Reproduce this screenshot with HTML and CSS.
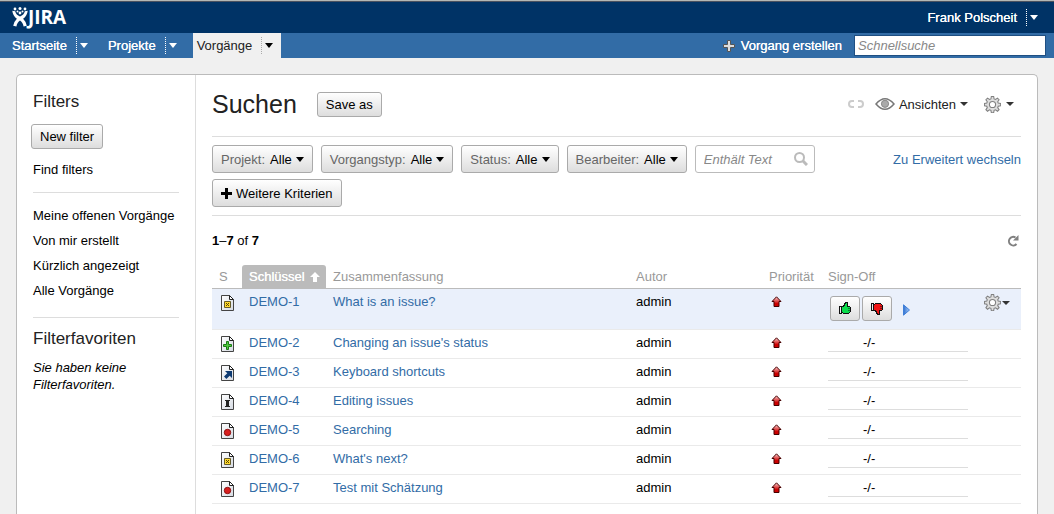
FILE: index.html
```html
<!DOCTYPE html>
<html lang="de">
<head>
    <meta charset="UTF-8">
    <meta name="viewport" content="width=device-width, initial-scale=1.0">
    <title>Suchen - JIRA</title>
    <link rel="stylesheet" href="styles.css">
</head>
<body>
    <!-- icon sprite -->
    <svg class="sprite" width="0" height="0" aria-hidden="true">
        <defs>
            <linearGradient id="page-fill" x1="0" y1="0" x2="1" y2="1">
                <stop offset="0" stop-color="#fff"/>
                <stop offset="1" stop-color="#d5dae2"/>
            </linearGradient>
            <linearGradient id="red-fill" x1="0" y1="0" x2="0" y2="1">
                <stop offset="0.1" stop-color="#f7b5b5"/>
                <stop offset="0.7" stop-color="#c00"/>
            </linearGradient>
            <linearGradient id="play-fill" x1="0" y1="0" x2="1" y2="0">
                <stop offset="0" stop-color="#2f6fd0"/>
                <stop offset="1" stop-color="#a9cdf6"/>
            </linearGradient>
        </defs>
        <symbol id="page" viewBox="0 0 13 16">
            <path d="M.5.5h8l4 4v11H.5z" fill="url(#page-fill)" stroke="#444"/>
            <path d="M8.5.5v4h4z" fill="#fff" stroke="#222"/>
        </symbol>
        <symbol id="gear" viewBox="0 0 16 16">
            <path d="M6.900.5h2.200l.4 2.300 1.300.5 1.900-1.300 1.500 1.500-1.300 1.900.5 1.300 2.300.4v2.100l-2.300.4-.5 1.300 1.300 1.900-1.500 1.500-1.900-1.300-1.300.5-.4 2.200H6.900l-.4-2.200-1.300-.5-1.900 1.300-1.500-1.500 1.300-1.900-.5-1.300L.4 9.200V7.100l2.200-.4.5-1.300-1.300-1.900L3.300 2l1.900 1.300 1.300-.5z" fill="#ddd" stroke="#808080"/>
            <circle cx="8" cy="8" r="2.900" fill="#fff" stroke="#808080"/>
        </symbol>
        <symbol id="thumb" viewBox="0 0 12 13">
            <path d="M6 0h3v4h2v1h1v5h-1v1h-1v1H4v-1H3v1H0V4h4V3h1V1h1z" fill="#111"/>
            <path d="M6 2h1V1h1v4h3v5h-1v1H4v-1H3V5h2V4h1z" fill="currentColor"/>
            <path d="M1 5h1v6H1z" fill="#eee"/>
            <path d="M2 5h1v6H2zM9 6h2v1H9zM9 8h2v1H9z" fill="#111" fill-opacity=".5"/>
        </symbol>
        <symbol id="prio" viewBox="0 0 11 11">
            <path d="M5.500.8 10 5.500H8v5H3v-5H1z" fill="url(#red-fill)" stroke="#400"/>
        </symbol>
        <symbol id="status-closed" viewBox="0 0 13 16">
            <use href="#page"/>
            <path d="M3.500 6.500h6v6h-6z" fill="#ffd92e" stroke="#665c2a"/>
            <path d="M5 8h1v1H5zM7 8h1v1H7zM6 9h1v1H6zM5 10h1v1H5zM7 10h1v1H7z" fill="#5a4600"/>
        </symbol>
        <symbol id="status-new" viewBox="0 0 13 16">
            <use href="#page"/>
            <path d="M5.500 5.500h2v3h3v2h-3v3h-2v-3h-3v-2h3z" fill="#4fc93c" stroke="#1a7a14"/>
        </symbol>
        <symbol id="status-assigned" viewBox="0 0 13 16">
            <use href="#page"/>
            <path d="M4 6h7v7L8.700 10.700 5.400 14 3 11.600l3.300-3.300z" fill="#0d3a72"/>
        </symbol>
        <symbol id="status-info" viewBox="0 0 13 16">
            <use href="#page"/>
            <path d="M4 6h5v1H8v5h1v1H4v-1h1V7H4z" fill="#222"/>
        </symbol>
        <symbol id="status-open" viewBox="0 0 13 16">
            <use href="#page"/>
            <circle cx="6.500" cy="9.500" r="3.200" fill="#d81e1e" stroke="#8c1010"/>
        </symbol>
    </svg>

    <header class="header">
        <a class="logo" href="#">
            <svg width="16" height="20" viewBox="0 0 16 20" fill="#fff" aria-hidden="true">
                <circle cx="3" cy="2" r="1.400"/><circle cx="8" cy="1.500" r="1.500"/><circle cx="13" cy="2" r="1.400"/>
                <circle cx="5.500" cy="4.500" r="1"/><circle cx="10.500" cy="4.500" r="1"/><circle cx="8" cy="6" r="1.400"/>
                <path d="M.3 3.800 3.200 4.300Q4 8 8 9.400 12 8 12.800 4.300l2.900-.5q-.5 5-4.600 8 2.800 2.700 3.700 6.900l-3.200.8Q10.600 15 8 13.600 5.400 15 4.400 19.500l-3.200-.8q.9-4.200 3.700-6.900-4.100-3-4.600-8z"/>
            </svg>
            <span>JIRA</span>
        </a>
        <div class="menu-item">
            <a href="#">Frank Polscheit</a>
            <button class="menu-arrow" aria-label="Benutzermenü"><i class="caret"></i></button>
        </div>
    </header>

    <nav class="nav">
        <div class="menu-item">
            <a href="#">Startseite</a>
            <button class="menu-arrow" aria-label="Startseite Menü"><i class="caret"></i></button>
        </div>
        <div class="menu-item">
            <a href="#">Projekte</a>
            <button class="menu-arrow" aria-label="Projekte Menü"><i class="caret"></i></button>
        </div>
        <div class="menu-item active">
            <a href="#">Vorgänge</a>
            <button class="menu-arrow" aria-label="Vorgänge Menü"><i class="caret"></i></button>
        </div>
        <a class="create" href="#">
            <svg width="12" height="12" viewBox="0 0 12 12" aria-hidden="true"><path d="M4.500.5h3v4h4v3h-4v4h-3v-4h-4v-3h4z" fill="#ddd" stroke="#555"/></svg>
            Vorgang erstellen
        </a>
        <input class="quick-search" type="text" placeholder="Schnellsuche" aria-label="Schnellsuche">
    </nav>

    <div class="panel">
        <aside class="sidebar">
            <h2>Filters</h2>
            <button class="btn new-filter">New filter</button>
            <a class="find" href="#">Find filters</a>
            <ul class="filter-list">
                <li><a href="#">Meine offenen Vorgänge</a></li>
                <li><a href="#">Von mir erstellt</a></li>
                <li><a href="#">Kürzlich angezeigt</a></li>
                <li><a href="#">Alle Vorgänge</a></li>
            </ul>
            <h2>Filterfavoriten</h2>
            <p class="empty">Sie haben keine Filterfavoriten.</p>
        </aside>

        <main class="content">
            <div class="title-bar">
                <h1>Suchen</h1>
                <button class="btn">Save as</button>
                <div class="tools">
                    <button class="tool" aria-label="Link">
                        <svg width="16" height="8" viewBox="0 0 16 8" fill="none" stroke="#ccc" stroke-width="2" aria-hidden="true"><path d="M6 1H4a3 3 0 0 0 0 6h2M10 1h2a3 3 0 0 1 0 6h-2"/></svg>
                    </button>
                    <button class="tool views">
                        <svg width="20" height="12" viewBox="0 0 20 12" aria-hidden="true"><path d="M1 6q9-10.500 18 0-9 10.500-18 0z" fill="#fff" stroke="#777" stroke-width="1.500"/><circle cx="10" cy="5.800" r="3.600" fill="#aaa" stroke="#888"/></svg>
                        Ansichten
                        <i class="caret small"></i>
                    </button>
                    <button class="tool options" aria-label="Optionen">
                        <svg width="17" height="17"><use href="#gear"/></svg>
                        <i class="caret small"></i>
                    </button>
                </div>
            </div>

            <div class="search-bar">
                <div class="criteria">
                    <button class="btn criterion"><span>Projekt:</span> Alle <i class="caret"></i></button>
                    <button class="btn criterion"><span>Vorgangstyp:</span> Alle <i class="caret"></i></button>
                    <button class="btn criterion"><span>Status:</span> Alle <i class="caret"></i></button>
                    <button class="btn criterion"><span>Bearbeiter:</span> Alle <i class="caret"></i></button>
                    <label class="text-search">
                        <input type="text" placeholder="Enthält Text" aria-label="Enthält Text">
                        <svg width="14" height="14" viewBox="0 0 14 14" fill="none" stroke="#bbb" aria-hidden="true"><circle cx="5.500" cy="5.500" r="4.500" stroke-width="2"/><path d="m9 9 4 4" stroke-width="3"/></svg>
                    </label>
                    <button class="btn criterion">
                        <svg width="11" height="11" viewBox="0 0 11 11" aria-hidden="true"><path d="M4 0h3v4h4v3H7v4H4V7H0V4h4z"/></svg>
                        Weitere Kriterien
                    </button>
                </div>
                <a class="switch" href="#">Zu Erweitert wechseln</a>
            </div>

            <div class="result-bar">
                <div><b>1</b>–<b>7</b> of <b>7</b></div>
                <button class="tool" aria-label="Aktualisieren">
                    <svg width="12" height="12" viewBox="0 0 12 12" aria-hidden="true"><path d="M9.500 9A4.300 4.300 0 1 1 8.500 2.500" fill="none" stroke="#808080" stroke-width="2"/><path d="M6 5.500h5.500V0z" fill="#808080"/></svg>
                </button>
            </div>

            <table class="issues">
                <thead>
                    <tr>
                        <th class="col-status">S</th>
                        <th class="col-key"><div>Schlüssel <svg width="10" height="10" viewBox="0 0 10 10" fill="#fff" aria-hidden="true"><path d="m5 0 5 5H7v5H3V5H0z"/></svg></div></th>
                        <th>Zusammenfassung</th>
                        <th class="col-author">Autor</th>
                        <th class="col-prio">Priorität</th>
                        <th class="col-sign">Sign-Off</th>
                        <th class="col-actions"></th>
                    </tr>
                </thead>
                <tbody>
                    <tr class="selected">
                        <td class="status"><svg width="13" height="16"><use href="#status-closed"/></svg></td>
                        <td><a href="#">DEMO-1</a></td>
                        <td><a href="#">What is an issue?</a></td>
                        <td>admin</td>
                        <td class="prio"><svg width="11" height="11"><use href="#prio"/></svg></td>
                        <td>
                            <div class="votes">
                                <button class="btn vote up" aria-label="Zustimmen"><svg width="12" height="13" shape-rendering="crispEdges"><use href="#thumb"/></svg></button>
                                <button class="btn vote down" aria-label="Ablehnen"><svg width="12" height="13" shape-rendering="crispEdges"><use href="#thumb"/></svg></button>
                                <button class="tool play" aria-label="Weiter"><svg width="7" height="12" viewBox="0 0 7 12"><path d="M.5.8v10.400L6.500 6z" fill="url(#play-fill)" stroke="#3f7fd8"/></svg></button>
                            </div>
                        </td>
                        <td class="actions"><button class="tool" aria-label="Aktionen"><svg width="17" height="17"><use href="#gear"/></svg><i class="caret small"></i></button></td>
                    </tr>
                    <tr>
                        <td class="status"><svg width="13" height="16"><use href="#status-new"/></svg></td>
                        <td><a href="#">DEMO-2</a></td>
                        <td><a href="#">Changing an issue's status</a></td>
                        <td>admin</td>
                        <td class="prio"><svg width="11" height="11"><use href="#prio"/></svg></td>
                        <td><div class="sign">-/-</div></td>
                        <td></td>
                    </tr>
                    <tr>
                        <td class="status"><svg width="13" height="16"><use href="#status-assigned"/></svg></td>
                        <td><a href="#">DEMO-3</a></td>
                        <td><a href="#">Keyboard shortcuts</a></td>
                        <td>admin</td>
                        <td class="prio"><svg width="11" height="11"><use href="#prio"/></svg></td>
                        <td><div class="sign">-/-</div></td>
                        <td></td>
                    </tr>
                    <tr>
                        <td class="status"><svg width="13" height="16"><use href="#status-info"/></svg></td>
                        <td><a href="#">DEMO-4</a></td>
                        <td><a href="#">Editing issues</a></td>
                        <td>admin</td>
                        <td class="prio"><svg width="11" height="11"><use href="#prio"/></svg></td>
                        <td><div class="sign">-/-</div></td>
                        <td></td>
                    </tr>
                    <tr>
                        <td class="status"><svg width="13" height="16"><use href="#status-open"/></svg></td>
                        <td><a href="#">DEMO-5</a></td>
                        <td><a href="#">Searching</a></td>
                        <td>admin</td>
                        <td class="prio"><svg width="11" height="11"><use href="#prio"/></svg></td>
                        <td><div class="sign">-/-</div></td>
                        <td></td>
                    </tr>
                    <tr>
                        <td class="status"><svg width="13" height="16"><use href="#status-closed"/></svg></td>
                        <td><a href="#">DEMO-6</a></td>
                        <td><a href="#">What's next?</a></td>
                        <td>admin</td>
                        <td class="prio"><svg width="11" height="11"><use href="#prio"/></svg></td>
                        <td><div class="sign">-/-</div></td>
                        <td></td>
                    </tr>
                    <tr>
                        <td class="status"><svg width="13" height="16"><use href="#status-open"/></svg></td>
                        <td><a href="#">DEMO-7</a></td>
                        <td><a href="#">Test mit Schätzung</a></td>
                        <td>admin</td>
                        <td class="prio"><svg width="11" height="11"><use href="#prio"/></svg></td>
                        <td><div class="sign">-/-</div></td>
                        <td></td>
                    </tr>
                </tbody>
            </table>
        </main>
    </div>
</body>
</html>
```
FILE: styles.css
```css
* {
    box-sizing: border-box;
}

body {
    margin: 0;
    min-height: 100vh;
    display: flex;
    flex-direction: column;
    background: #f0f0f0;
    color: #000;
    font-family: "Liberation Sans", Arial, sans-serif;
    font-size: 13px;
    line-height: 17px;
}

a {
    color: inherit;
    text-decoration: none;
}

button,
input {
    font: inherit;
    color: inherit;
}

button {
    cursor: pointer;
}

svg {
    display: block;
    flex: none;
}

.sprite {
    position: absolute;
}

.caret {
    flex: none;
    border: 4px solid transparent;
    border-top: 5px solid currentColor;
    border-bottom: 0;
}

.caret.small {
    border-top-width: 4px;
    color: #333;
}

/* Header */
.header {
    display: flex;
    justify-content: space-between;
    align-items: center;
    height: 33px;
    padding: 0 8px 0 12px;
    border-top: 1px solid #b3b7b5;
    background: #036;
    box-shadow: inset 0 1px #4a5260;
    color: #fff;
}

.logo {
    display: flex;
    align-items: center;
    font-family: "Open Sans", sans-serif;
    font-size: 19px;
    font-weight: 700;
}

.menu-item {
    display: flex;
    align-items: center;
    gap: 9px;
    height: 25px;
    padding: 0 8px 0 4px;
    text-shadow: 0 0 0 #fff;
}

.menu-arrow {
    display: flex;
    align-items: center;
    height: 17px;
    padding: 0 0 0 3px;
    border: 0;
    border-left: 1px dotted #fff;
    background: none;
}

.nav {
    display: flex;
    align-items: center;
    gap: 8px;
    height: 25px;
    padding: 0 8px;
    background: #326ca6;
    color: #fff;
}

.menu-item.active {
    background: #f0f0f0;
    color: #222;
    text-shadow: none;
}

.active .menu-arrow {
    border-color: #aaa;
    color: #000;
}

.create {
    display: flex;
    align-items: center;
    gap: 6px;
    margin-left: auto;
    margin-right: 4px;
    text-shadow: 0 0 0 #fff;
}

.quick-search {
    width: 192px;
    height: 21px;
    padding: 0 3px;
    border: 1px solid #1f4f82;
    background: #fff;
    color: #333;
}

input::placeholder {
    color: #888;
    font-style: italic;
    opacity: 1;
}

/* Panel */
.panel {
    flex: 1;
    display: flex;
    margin: 16px 16px 0;
    border: 1px solid #bbb;
    border-bottom: 0;
    border-radius: 5px 5px 0 0;
    background: #fff;
}

.btn {
    display: flex;
    align-items: center;
    justify-content: center;
    height: 25px;
    padding: 0 8px;
    border: 1px solid #aaa;
    border-radius: 3px;
    background: linear-gradient(#fff, #ddd);
    white-space: nowrap;
}

.tool {
    display: flex;
    align-items: center;
    padding: 0;
    border: 0;
    background: none;
    color: #222;
}

.sidebar {
    flex: none;
    width: 179px;
    padding: 16px;
    border-right: 1px solid #ddd;
}

.sidebar h2 {
    margin: 0;
    color: #222;
    font-size: 17px;
    font-weight: 400;
    line-height: 22px;
}

.new-filter {
    margin: 11px 0 12px -2px;
}

.find {
    display: block;
}

.filter-list {
    margin: 14px 0 10px;
    padding: 10px 0 14px;
    border-top: 1px solid #ddd;
    border-bottom: 1px solid #ddd;
    list-style: none;
    line-height: 25px;
    white-space: nowrap;
}

.empty {
    margin: 9px 0 0;
    font-style: italic;
}

.content {
    flex: 1;
    min-width: 0;
    padding: 16px;
}

.title-bar {
    display: flex;
    align-items: center;
    height: 26px;
}

h1 {
    margin: 0 20px 0 0;
    color: #222;
    font-size: 25px;
    font-weight: 400;
    line-height: 26px;
}

.tools {
    display: flex;
    align-items: center;
    margin-left: auto;
    padding-right: 7px;
}

.views {
    gap: 4px;
    margin: 0 16px 0 11px;
}

.options {
    gap: 5px;
}

.search-bar {
    display: flex;
    justify-content: space-between;
    align-items: flex-start;
    margin-top: 19px;
    padding: 8px 0;
    border-top: 1px solid #ddd;
    border-bottom: 1px solid #ddd;
}

.criteria {
    display: flex;
    flex-wrap: wrap;
    gap: 6px 8px;
    max-width: 640px;
}

.criterion {
    gap: 4px;
    height: 28px;
}

.criterion span {
    margin-right: 1px;
    color: #666;
}

.text-search {
    display: flex;
    align-items: center;
    width: 120px;
    height: 28px;
    padding: 0 6px 0 8px;
    border: 1px solid #bbb;
    border-radius: 3px;
}

.text-search input {
    flex: 1;
    min-width: 0;
    padding: 0;
    border: 0;
    outline: 0;
}

.switch {
    padding-top: 6px;
    color: #326ca6;
}

.result-bar {
    display: flex;
    justify-content: space-between;
    align-items: center;
    margin: 16px 2px 16px 0;
}

/* Issue table */
.issues {
    width: 100%;
    border-collapse: separate;
    border-spacing: 0;
    table-layout: fixed;
}

.issues th {
    height: 24px;
    padding: 0 7px;
    border-bottom: 1px solid #bbb;
    color: #999;
    font-weight: 400;
    text-align: left;
}

.issues td {
    height: 29px;
    padding: 4px 7px 0;
    border-bottom: 1px solid #eaeaea;
    vertical-align: top;
}

.issues td a {
    color: #326ca6;
}

.col-status {
    width: 30px;
}

.issues .col-key {
    width: 84px;
    background: #bbb;
    border-radius: 3px 3px 0 0;
    color: #fff;
    text-shadow: 0 0 0 #fff;
}

.col-key div {
    display: flex;
    align-items: center;
    gap: 5px;
}

.col-author {
    width: 133px;
}

.col-prio {
    width: 59px;
}

.col-sign {
    width: 154px;
}

.col-actions {
    width: 46px;
}

.issues .selected td {
    height: 41px;
    background: #eaf0fb;
}

.issues .status {
    padding: 6px 9px 0;
}

.issues .prio {
    padding-top: 7px;
    padding-left: 9px;
}

.issues .actions {
    padding: 5px 9px 0;
}

.sign {
    height: 18px;
    padding-left: 35px;
    border-bottom: 1px solid #ddd;
}

.votes {
    display: flex;
    align-items: center;
    gap: 2px;
    padding: 3px 2px 0;
}

.vote {
    width: 30px;
    padding: 0;
}

.up {
    color: #0bdc4b;
}

.down {
    color: #f01414;
}

.down svg {
    transform: scaleY(-1);
}

.play {
    margin: 3px 0 0 9px;
}

.actions .tool {
    gap: 1px;
}
```
